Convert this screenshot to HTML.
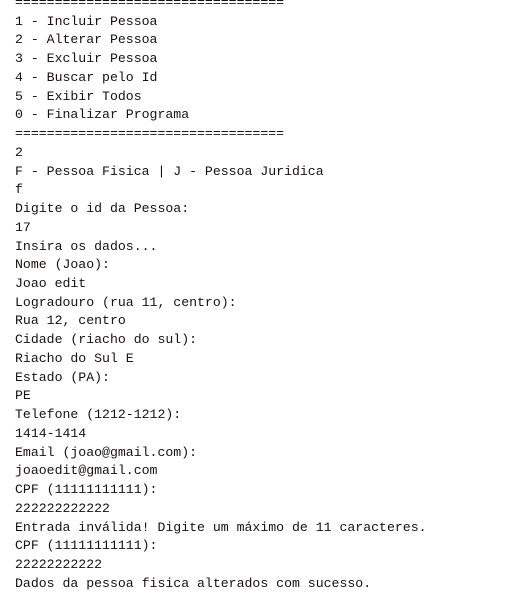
<!DOCTYPE html>
<html><head><meta charset="utf-8"><style>
html,body{margin:0;padding:0;background:#fff;width:515px;height:597px;overflow:hidden}
pre{position:absolute;left:15px;top:-6px;margin:0;font-family:"Liberation Mono","Courier New",monospace;font-size:13.2px;line-height:18.73px;color:#1a1010}
</style></head><body><pre>==================================
1 - Incluir Pessoa
2 - Alterar Pessoa
3 - Excluir Pessoa
4 - Buscar pelo Id
5 - Exibir Todos
0 - Finalizar Programa
==================================
2
F - Pessoa Fisica | J - Pessoa Juridica
f
Digite o id da Pessoa:
17
Insira os dados...
Nome (Joao):
Joao edit
Logradouro (rua 11, centro):
Rua 12, centro
Cidade (riacho do sul):
Riacho do Sul E
Estado (PA):
PE
Telefone (1212-1212):
1414-1414
Email (joao@gmail.com):
joaoedit@gmail.com
CPF (11111111111):
222222222222
Entrada inválida! Digite um máximo de 11 caracteres.
CPF (11111111111):
22222222222
Dados da pessoa fisica alterados com sucesso.</pre></body></html>
